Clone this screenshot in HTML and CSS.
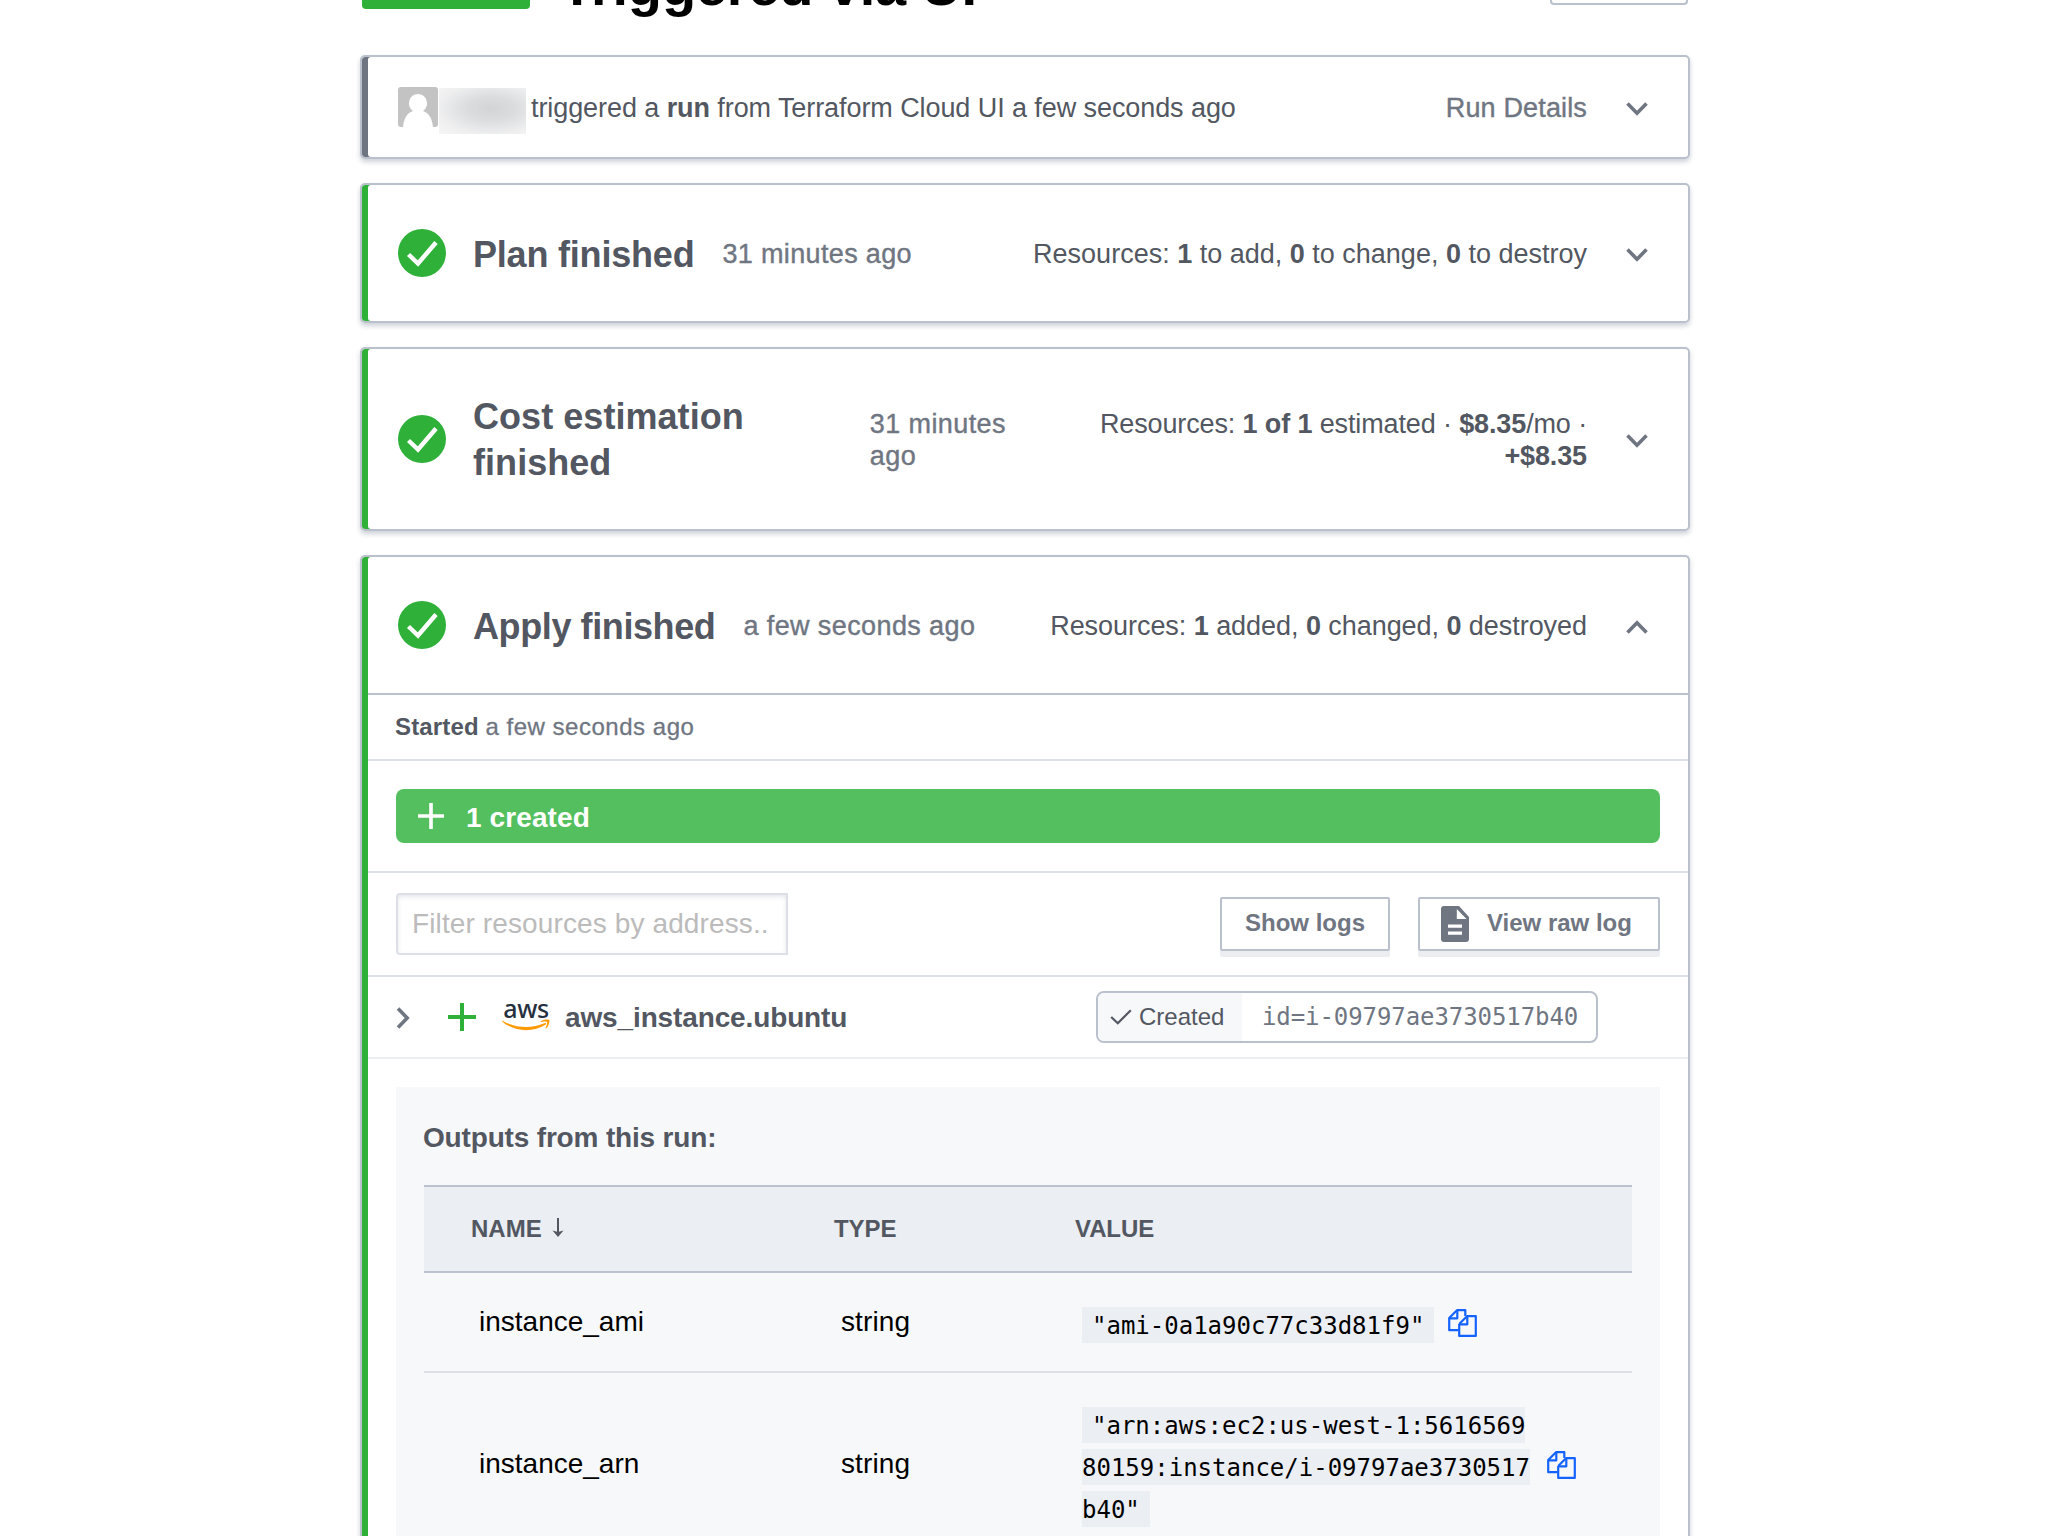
FILE: index.html
```html
<!DOCTYPE html>
<html lang="en">
<head>
<meta charset="utf-8">
<title>Triggered via UI</title>
<link rel="stylesheet" href="styles.css">
</head>
<body>
<svg class="sprite" aria-hidden="true">
  <symbol id="chevron" viewBox="0 0 24 16"><path d="M2.5 2.5 12 12.2 21.5 2.5" fill="none" stroke="currentColor" stroke-width="3.6"/></symbol>
  <symbol id="status-ok" viewBox="0 0 48 48"><circle cx="24" cy="24" r="24" fill="#2eb039"/><path d="M10.5 25.5 20 34.5 38 13.5" fill="none" stroke="#fff" stroke-width="4.4"/></symbol>
  <symbol id="copy" viewBox="0 0 29 28"><g fill="none" stroke="currentColor" stroke-width="2.2" stroke-linejoin="round"><path d="M10.5 21.2H1.2V9L9 1.200H17.300V7"/><path d="M1.500 9.300H9.300V1.500"/><path d="M11.200 15 19 7.200H27.800V26.900H11.200V15"/><path d="M11.500 15.300H19.300V7.500"/></g></symbol>
</svg>
<main class="page">
  <header class="run-header">
    <span class="run-status"></span>
    <h1 class="run-title">Triggered via UI</h1>
    <span class="run-action"></span>
  </header>

  <section class="card card-event">
    <svg class="avatar" viewBox="0 0 40 40"><rect width="40" height="40" rx="3" fill="#c3c3c3"/><path d="M20 7a9 9.300 0 0 1 5 17C31 26 34 31 35 40H5C6 31 9 26 15 24A9 9.300 0 0 1 20 7Z" fill="#fff"/></svg>
    <span class="redacted"></span>
    <p class="text event-text">triggered a <b>run</b> from Terraform Cloud UI a few seconds ago</p>
    <span class="text details">Run Details</span>
    <svg class="chevron"><use href="#chevron"/></svg>
  </section>

  <section class="card card-ok card-plan">
    <svg class="status"><use href="#status-ok"/></svg>
    <h2 class="card-title title-plan">Plan finished</h2>
    <span class="text when">31 minutes ago</span>
    <p class="text summary summary-plan">Resources: <b>1</b> to add, <b>0</b> to change, <b>0</b> to destroy</p>
    <svg class="chevron"><use href="#chevron"/></svg>
  </section>

  <section class="card card-ok card-cost">
    <svg class="status"><use href="#status-ok"/></svg>
    <h2 class="card-title title-cost">Cost estimation<br>finished</h2>
    <span class="text when">31 minutes<br>ago</span>
    <p class="text summary summary-cost">Resources: <b>1 of 1</b> estimated · <b>$8.35</b>/mo ·<br><b>+$8.35</b></p>
    <svg class="chevron"><use href="#chevron"/></svg>
  </section>

  <section class="card card-ok card-apply">
    <div class="apply-header">
      <svg class="status"><use href="#status-ok"/></svg>
      <h2 class="card-title title-apply">Apply finished</h2>
      <span class="text when">a few seconds ago</span>
      <p class="text summary">Resources: <b>1</b> added, <b>0</b> changed, <b>0</b> destroyed</p>
      <svg class="chevron chevron-up"><use href="#chevron"/></svg>
    </div>
    <div class="started"><b>Started</b> <span class="started-when">a few seconds ago</span></div>
    <div class="created-row">
      <div class="created-bar">
        <svg class="plus-white" viewBox="0 0 26 26"><path d="M13 0V26M0 13H26" stroke="#fff" stroke-width="3.600"/></svg>
        <span class="created-text">1 created</span>
      </div>
    </div>
    <div class="toolbar">
      <div class="filter">Filter resources by address..</div>
      <div class="button button-show">Show logs</div>
      <div class="button button-raw">
        <svg class="doc" viewBox="0 0 28 36"><path d="M3 0H18L28 11V33Q28 36 25 36H3Q0 36 0 33V3Q0 0 3 0Z" fill="#6f7682"/><path d="M15.800 3V13H25.500ZM7 18.500H21V21.800H7ZM7 25.500H21V28.800H7Z" fill="#fff"/></svg>
        <span>View raw log</span>
      </div>
    </div>
    <div class="resource">
      <svg class="chevron-right" viewBox="0 0 14 22"><path d="M2 1.500 11.200 11 2 20.500" fill="none" stroke="#6f7682" stroke-width="3.600"/></svg>
      <svg class="plus-green" viewBox="0 0 28 28"><path d="M14 0V28M0 14H28" stroke="#2eb039" stroke-width="4"/></svg>
      <span class="aws"><span class="aws-word">aws</span><svg class="aws-smile" viewBox="0 0 48 12"><path d="M.4 1.700C14 9.500 30 9.600 42.500 4.200 44 3.600 45 4.600 43.600 5.600 31 14 12 13 .2 2.400-.3 1.900 0 1.400.4 1.700Z" fill="#f90"/><path d="M38.800 2.300C42 .3 46.700.2 47.300 1.200 48 2.400 46.500 7.500 44.200 9.300 43.700 9.700 43.300 9.400 43.600 8.800 44.400 7 45.800 3.600 45 2.900 44.300 2.200 40.800 2.700 39.200 2.900 38.500 3 38.300 2.600 38.800 2.300Z" fill="#f90"/></svg></span>
      <span class="resource-name">aws_instance.ubuntu</span>
      <div class="badge">
        <span class="badge-state"><svg class="tick" viewBox="0 0 22 16"><path d="M1.200 8 7.800 14.200 20.800 1.200" fill="none" stroke="#525761" stroke-width="2.200"/></svg>Created</span>
        <code class="badge-id">id=i-09797ae3730517b40</code>
      </div>
    </div>
    <div class="outputs">
      <h3 class="outputs-title">Outputs from this run:</h3>
      <table class="table">
        <colgroup><col class="col-name"><col class="col-type"><col></colgroup>
        <thead>
          <tr><th>NAME<svg class="sort" viewBox="0 0 12 19"><path d="M6 0V16" stroke="#525761" stroke-width="2"/><path d="M.5 12.500 6 14 11.500 12.500 6 19Z" fill="#525761"/></svg></th><th>TYPE</th><th>VALUE</th></tr>
        </thead>
        <tbody>
          <tr class="row-ami"><td>instance_ami</td><td>string</td><td><div class="value"><span class="code-wrap"><code class="code">"ami-0a1a90c77c33d81f9"</code></span><svg class="copy"><use href="#copy"/></svg></div></td></tr>
          <tr class="row-arn"><td>instance_arn</td><td>string</td><td><div class="value"><span class="code-wrap"><code class="code">"arn:aws:ec2:us-west-1:5616569<br>80159:instance/i-09797ae3730517<br>b40"</code></span><svg class="copy"><use href="#copy"/></svg></div></td></tr>
        </tbody>
      </table>
    </div>
  </section>
</main>
</body>
</html>
```
FILE: styles.css
```css
* { box-sizing: border-box; }
html, body { height: 100%; }
body {
  margin: 0;
  overflow: hidden;
  background: #fff;
  color: #525761;
  font-family: "Liberation Sans", Arial, sans-serif;
}
h1, h2, h3, p { margin: 0; }
svg { display: block; flex: none; }
.sprite { display: none; }

.page {
  display: flex;
  flex-direction: column;
  gap: 24px;
  width: 1330px;
  height: 100%;
  margin-left: 360px;
}

/* Run header, scrolled mostly out of view */
.run-header {
  display: flex;
  flex: none;
  align-items: flex-start;
  height: 31px;
  padding: 0 2px;
}
.run-status {
  width: 168px;
  height: 9px;
  border-radius: 0 0 4px 4px;
  background: #2eb039;
}
.run-title {
  margin: -44px 0 0 30px;
  color: #000;
  font-size: 56px;
  letter-spacing: -.2px;
  line-height: 60px;
  white-space: nowrap;
}
.run-action {
  width: 138px;
  height: 5px;
  margin-left: auto;
  border: 2px solid #bac1cc;
  border-top: 0;
  border-radius: 0 0 4px 4px;
}

/* Cards */
.card {
  display: flex;
  flex: none;
  align-items: center;
  padding: 0 39px 0 36px;
  border: 2px solid #bac1cc;
  border-radius: 5px;
  box-shadow: inset 6px 0 0 #6f7682, 0 3px 5px rgba(101, 112, 135, .32);
}
.card-ok { box-shadow: inset 6px 0 0 #2eb039, 0 3px 5px rgba(101, 112, 135, .32); }
.card-event { height: 104px; }
.card-plan { height: 140px; }
.card-cost { height: 184px; }
.card-apply {
  flex: 1;
  flex-direction: column;
  align-items: stretch;
  min-height: 0;
  padding: 0 0 0 6px;
  border-bottom: 0;
  border-radius: 5px 5px 0 0;
}
.apply-header {
  display: flex;
  flex: none;
  align-items: center;
  height: 138px;
  padding: 0 39px 0 30px;
  border-bottom: 2px solid #bac1cc;
}
.text {
  padding-top: 2px;
  font-size: 27px;
  letter-spacing: -.05px;
  line-height: 32px;
  white-space: nowrap;
}
.event-text { letter-spacing: -.08px; }
.avatar { width: 40px; height: 40px; }
.redacted {
  width: 87px;
  height: 46px;
  margin: 8px 5px 0 1px;
  background: radial-gradient(ellipse at 60% 45%, #d2d4d6 0, #dadcde 32%, #efeff0 72%, #f6f6f7 100%);
}
.details, .when {
  color: #6f7682;
  -webkit-text-stroke: .4px #6f7682;
}
.details { margin-left: auto; letter-spacing: .15px; }
.status { width: 48px; height: 48px; }
.card-title {
  margin-left: 27px;
  padding-top: 3px;
  font-size: 36px;
  line-height: 46px;
  white-space: nowrap;
}
.title-plan { letter-spacing: -.2px; }
.title-cost { padding-top: 2px; letter-spacing: .05px; }
.title-apply { letter-spacing: -.4px; }
.when { margin-left: 28px; letter-spacing: .4px; }
.title-plan + .when { letter-spacing: .35px; }
.title-cost + .when { margin-left: 126px; }
.summary { margin-left: auto; text-align: right; }
.summary-plan { letter-spacing: 0; }
.summary-cost { letter-spacing: -.13px; }
.chevron {
  width: 24px;
  height: 16px;
  margin: 3px 0 0 38px;
  color: #6f7682;
}
.chevron-up { transform: scaleY(-1); }

/* Apply details */
.started {
  flex: none;
  height: 66px;
  padding: 18px 27px 0;
  border-bottom: 2px solid #dce0e6;
  color: #6f7682;
  font-size: 24px;
  line-height: 28px;
}
.started b { color: #525761; letter-spacing: .15px; }
.started-when { letter-spacing: .52px; -webkit-text-stroke: .3px #6f7682; }
.created-row {
  flex: none;
  padding: 28px;
  border-bottom: 2px solid #dce0e6;
}
.created-bar {
  display: flex;
  align-items: center;
  gap: 22px;
  height: 54px;
  padding: 0 22px;
  border-radius: 8px;
  background: #54bf5e;
  color: #fff;
  font-size: 28px;
  font-weight: bold;
}
.created-text { padding-top: 3px; letter-spacing: .1px; }
.plus-white { width: 26px; height: 26px; }
.toolbar {
  display: flex;
  flex: none;
  align-items: flex-start;
  height: 104px;
  padding: 20px 28px 0;
  border-bottom: 2px solid #dce0e6;
}
.filter {
  width: 392px;
  height: 62px;
  padding: 0 14px;
  border: 2px solid #dce0e6;
  border-radius: 4px 0 0 4px;
  box-shadow: inset 0 2px 4px rgba(101, 112, 135, .16);
  color: #bbb;
  font-size: 28px;
  letter-spacing: .12px;
  line-height: 58px;
  white-space: nowrap;
}
.button {
  display: flex;
  align-items: center;
  height: 54px;
  margin-top: 4px;
  border: 2px solid #bac1cc;
  border-radius: 2px;
  box-shadow: 0 6px 0 #ebedf1;
  color: #6f7682;
  font-size: 24px;
  font-weight: bold;
  line-height: 48px;
  white-space: nowrap;
}
.button-show { width: 170px; margin-left: auto; padding: 0 0 2px 23px; }
.button-raw { width: 242px; margin-left: 28px; padding-left: 21px; gap: 18px; }
.button-raw span { padding-bottom: 2px; }
.doc { width: 28px; height: 36px; }
.resource {
  display: flex;
  flex: none;
  align-items: center;
  height: 82px;
  padding: 0 90px 0 28px;
  border-bottom: 2px solid #ebeef2;
}
.chevron-right { width: 14px; height: 22px; margin-top: 2px; }
.plus-green { width: 28px; height: 28px; margin-left: 38px; }
.aws {
  display: flex;
  flex-direction: column;
  width: 48px;
  height: 30px;
  margin-left: 26px;
}
.aws-word {
  height: 17px;
  color: #252f3e;
  font-family: "Noto Sans", sans-serif;
  font-size: 25px;
  font-weight: 500;
  letter-spacing: -.3px;
  line-height: 12px;
  text-align: center;
}
.aws-smile { width: 48px; height: 12px; }
.resource-name {
  margin-left: 15px;
  padding-top: 2px;
  font-size: 28px;
  font-weight: bold;
  letter-spacing: -.13px;
}
.badge {
  display: flex;
  width: 502px;
  height: 52px;
  margin-left: auto;
  overflow: hidden;
  border: 2px solid #bac1cc;
  border-radius: 8px;
  line-height: 48px;
}
.badge-state {
  display: flex;
  align-items: center;
  gap: 7px;
  width: 144px;
  padding-left: 12px;
  background: #f7f8fa;
  font-size: 24px;
}
.tick { width: 22px; height: 16px; }
.badge-id {
  padding-left: 20px;
  color: #6f7682;
  font-family: "DejaVu Sans Mono", monospace;
  font-size: 24px;
  letter-spacing: -.08px;
}

/* Outputs */
.outputs {
  flex: 1;
  min-height: 0;
  margin: 28px 28px 0;
  padding: 34px 28px 0;
  background: #f7f8fa;
}
.outputs-title {
  height: 64px;
  margin-left: -1px;
  padding-top: 1px;
  font-size: 28px;
  letter-spacing: -.17px;
  line-height: 32px;
}
.table {
  width: 1208px;
  border-collapse: separate;
  border-spacing: 0;
  table-layout: fixed;
}
.col-name { width: 362px; }
.col-type { width: 241px; }
.table th {
  height: 88px;
  padding: 0 0 0 47px;
  border: solid #bac1cc;
  border-width: 2px 0;
  background: #ebeef3;
  font-size: 24px;
  text-align: left;
}
.table th + th { padding-left: 48px; letter-spacing: -.1px; }
.sort { display: inline-block; width: 12px; height: 19px; margin-left: 10px; }
.table td {
  padding: 0 0 0 55px;
  border-bottom: 2px solid #dce0e6;
  color: #000;
  font-size: 28px;
}
.table td + td { letter-spacing: .1px; }
.row-ami td { height: 100px; }
.row-arn td { height: 184px; }
.value { display: flex; align-items: center; letter-spacing: 0; }
.code-wrap {
  padding-top: 6px;
  font: 24px/42px "DejaVu Sans Mono", monospace;
}
.code {
  padding: 3px 10px 5px;
  background: #ebeef3;
  font: inherit;
}
.row-ami .code-wrap, .row-arn .code-wrap { padding-top: 8px; }
.copy { width: 29px; height: 28px; margin: 1px 0 0 14px; color: #1563ff; }
.row-arn .copy { margin-left: 17px; }
.code { padding: 5px 10px 3px; }
```
